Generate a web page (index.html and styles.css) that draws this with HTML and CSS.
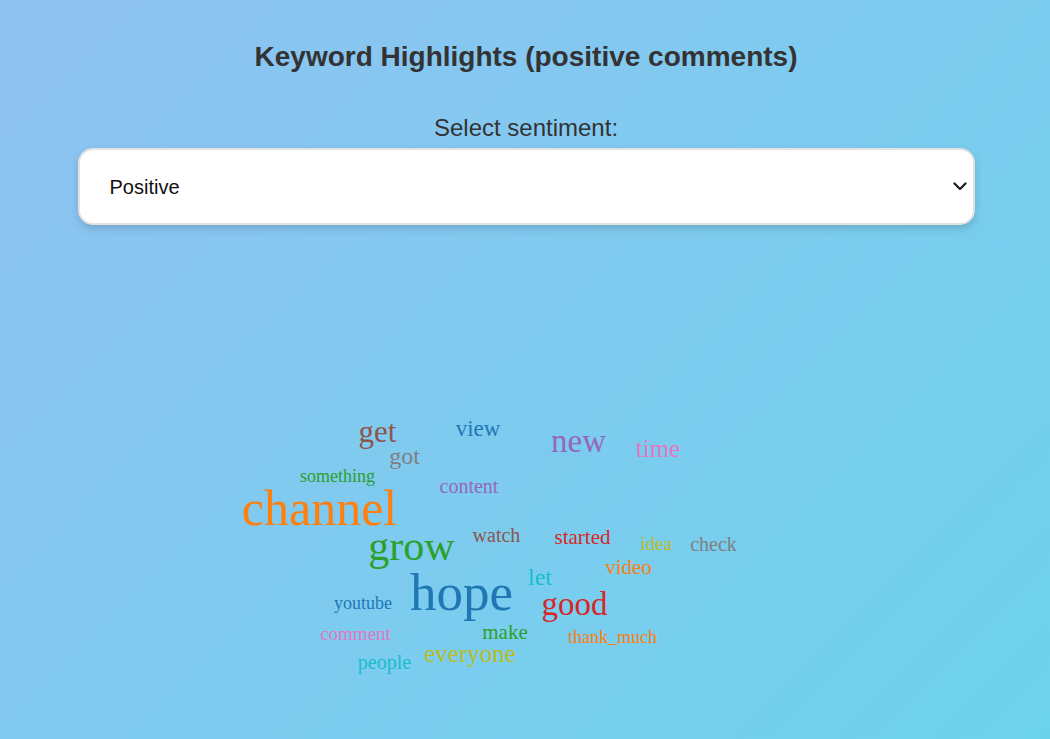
FILE: index.html
```html
<!DOCTYPE html>
<html lang="en">
<head>
<meta charset="utf-8">
<title>Keyword Highlights</title>
<link rel="stylesheet" href="styles.css">
</head>
<body>
<main class="container">
  <h1 class="title">Keyword Highlights (positive comments)</h1>
  <label class="label" for="sentiment">Select sentiment:</label>
  <div class="select-wrap">
    <select id="sentiment" class="select">
      <option>Positive</option>
      <option>Negative</option>
      <option>Neutral</option>
    </select>
    <svg class="chevron" width="14" height="9" viewBox="0 0 14 9"><path d="M1.5 1.5 L7 7 L12.5 1.5" fill="none" stroke="#1a1a1a" stroke-width="2.2" stroke-linecap="round" stroke-linejoin="round"/></svg>
  </div>
</main>
<div class="cloud">
  <svg class="cloud-svg" width="1050" height="300" viewBox="0 400 1050 300">
    <text x="319.5" y="525" font-size="50" fill="#ff7f0e">channel</text>
    <text x="461.5" y="610" font-size="53" fill="#1f77b4">hope</text>
    <text x="411.5" y="560" font-size="42" fill="#2ca02c">grow</text>
    <text x="574.5" y="615" font-size="33" fill="#d62728">good</text>
    <text x="578.5" y="452" font-size="33" fill="#9467bd">new</text>
    <text x="377.5" y="442" font-size="31" fill="#8c564b">get</text>
    <text x="404.5" y="464" font-size="24" fill="#7f7f7f">got</text>
    <text x="478" y="436" font-size="23" fill="#1f77b4">view</text>
    <text x="658" y="457" font-size="25" fill="#e377c2">time</text>
    <text x="337.5" y="482" font-size="18" fill="#2ca02c">something</text>
    <text x="469" y="493" font-size="20" fill="#9467bd">content</text>
    <text x="496.5" y="542" font-size="20" fill="#8c564b">watch</text>
    <text x="582.5" y="544" font-size="21" fill="#d62728">started</text>
    <text x="656" y="550" font-size="19" fill="#bcbd22">idea</text>
    <text x="713.5" y="551" font-size="20" fill="#7f7f7f">check</text>
    <text x="628.5" y="574" font-size="21" fill="#ff7f0e">video</text>
    <text x="540" y="585" font-size="24" fill="#17becf">let</text>
    <text x="363" y="609" font-size="18" fill="#1f77b4">youtube</text>
    <text x="355.5" y="640" font-size="19" fill="#e377c2">comment</text>
    <text x="505" y="639" font-size="21" fill="#2ca02c">make</text>
    <text x="612.5" y="643" font-size="18" fill="#ff7f0e">thank_much</text>
    <text x="470" y="662" font-size="25" fill="#bcbd22">everyone</text>
    <text x="384.5" y="669" font-size="20" fill="#17becf">people</text>
  </svg>
</div>
</body>
</html>
```
FILE: styles.css
```css
html, body {
  margin: 0;
  padding: 0;
}
body {
  min-height: 100vh;
  background: linear-gradient(135deg, #90c2f2 0%, #6dd3ec 100%);
  font-family: "Liberation Sans", Arial, sans-serif;
  color: #333;
  overflow: hidden;
}
.container {
  width: 897px;
  margin: 0 auto;
  padding-top: 41px;
  position: relative;
  left: 1px;
  display: flex;
  flex-direction: column;
  align-items: center;
}
.title {
  margin: 0 0 41px;
  font-size: 28px;
  line-height: 32px;
  font-weight: bold;
  color: #333;
}
.label {
  display: block;
  font-size: 24px;
  line-height: 28px;
  margin-bottom: 6px;
  color: #333;
}
.select-wrap {
  position: relative;
  width: 100%;
}
.select {
  -webkit-appearance: none;
  appearance: none;
  width: 100%;
  height: 77px;
  box-sizing: border-box;
  padding: 0 30px;
  font-family: "Liberation Sans", Arial, sans-serif;
  font-size: 20px;
  color: #111;
  background: #fff;
  border: 2px solid #e2e2e2;
  border-radius: 15px;
  box-shadow: 0 4px 8px rgba(0, 0, 0, 0.15);
  outline: none;
}
.chevron {
  position: absolute;
  right: 8px;
  top: 34px;
  pointer-events: none;
}
.cloud {
  margin-top: 175px;
  height: 300px;
}
.cloud-svg {
  display: block;
}
.cloud-svg text {
  font-family: "Liberation Serif", "Times New Roman", serif;
  text-anchor: middle;
}
```
